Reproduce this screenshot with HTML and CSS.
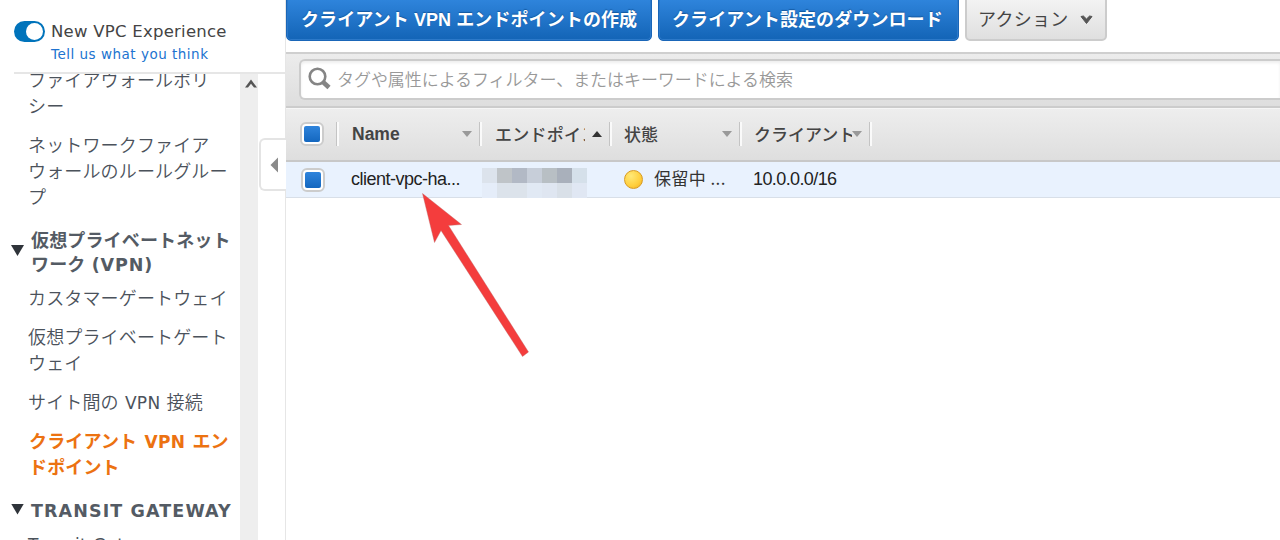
FILE: index.html
```html
<!DOCTYPE html>
<html lang="ja">
<head>
<meta charset="utf-8">
<title>クライアント VPN エンドポイント</title>
<link rel="stylesheet" href="styles.css">
</head>
<body>
<div class="app">
  <aside class="sidebar">
    <div class="experience">
      <span class="toggle"><span class="knob"></span></span>
      <div>
        <div class="exp-title">New VPC Experience</div>
        <a class="exp-link">Tell us what you think</a>
      </div>
    </div>
    <div class="nav-area">
      <nav class="nav">
        <a class="item">ファイアウォールポリ<br>シー</a>
        <a class="item">ネットワークファイア<br>ウォールのルールグルー<br>プ</a>
        <div class="group"><i class="tri"></i><span>仮想プライベートネット<br>ワーク <span class="paren">(VPN)</span></span></div>
        <a class="item">カスタマーゲートウェイ</a>
        <a class="item">仮想プライベートゲート<br>ウェイ</a>
        <a class="item">サイト間の <span class="abbr">VPN</span> 接続</a>
        <a class="item active">クライアント <span class="abbr">VPN</span> エン<br>ドポイント</a>
        <div class="group transit"><i class="tri"></i><span>TRANSIT GATEWAY</span></div>
        <a class="item next">Transit Gat</a>
      </nav>
      <div class="scrollbar"><svg width="12" height="10" viewBox="0 0 12 10"><path d="M0 8.5L6 0.5L12 8.5H9L6 4.7L3 8.5Z" fill="#555"/></svg></div>
    </div>
    <div class="collapse"><svg width="8" height="16" viewBox="0 0 8 16"><path d="M8 0.5V15.5L0.5 8Z" fill="#8a8a8a"/></svg></div>
  </aside>
  <main class="main">
    <div class="toolbar">
      <button class="btn primary create">クライアント <span class="vpn">VPN</span> エンドポイントの作成</button>
      <button class="btn primary download">クライアント設定のダウンロード</button>
      <button class="btn actions">アクション<svg width="13" height="10" viewBox="0 0 13 10"><path d="M1 1.5L6.5 8.5L12 1.5L9.6 1L6.5 4L3.4 1Z" fill="#555" stroke="#555" stroke-linejoin="round"/></svg></button>
    </div>
    <div class="filter">
      <div class="search">
        <svg width="23" height="23" viewBox="0 0 23 23" fill="none" stroke="#858585"><circle cx="9.5" cy="9.5" r="7.8" stroke-width="2.6"/><path d="M15 15L21 20.5" stroke-width="4.6"/></svg>
        <span>タグや属性によるフィルター、またはキーワードによる検索</span>
      </div>
    </div>
    <div class="row head">
      <div class="cell c-check"><i class="check"></i></div>
      <div class="cell c-name"><span class="label latin">Name</span><i class="down"></i></div>
      <div class="cell c-endpoint"><span class="label">エンドポイント</span><i class="up"></i></div>
      <div class="cell c-state"><span class="label">状態</span><i class="down"></i></div>
      <div class="cell c-client"><span class="label">クライアント</span><i class="down"></i></div>
    </div>
    <div class="row data">
      <div class="cell c-check"><i class="check"></i></div>
      <div class="cell c-name"><span class="client-name">client-vpc-ha...</span></div>
      <div class="cell c-endpoint">
        <div class="mosaic">
          <i class="m1"></i><i class="m2"></i><i class="m3"></i><i class="m4"></i><i class="m5"></i><i class="m6"></i><i class="m7"></i>
          <i class="n1"></i><i class="n2"></i><i class="n3"></i><i class="n4"></i><i class="n5"></i><i class="n6"></i><i class="n7"></i>
        </div>
      </div>
      <div class="cell c-state"><i class="dot"></i><span class="pending">保留中 ...</span></div>
      <div class="cell c-client"><span class="cidr">10.0.0.0/16</span></div>
    </div>
  </main>
  <svg class="arrow" width="110" height="170" viewBox="0 0 110 170"><path d="M2.5 3.5L41.5 34.5L28.5 35.5L108.5 162L102.5 166.5L21 40.5L14.5 52.5Z" fill="#f43d3d" stroke="#b66" stroke-width=".4"/></svg>
</div>
</body>
</html>
```
FILE: styles.css
```css
* { box-sizing: border-box; }
body { margin: 0; background: #fff; overflow: hidden; }
i { display: block; flex: none; }
svg { display: block; flex: none; }
.app { position: relative; display: flex; width: 1280px; height: 540px; overflow: hidden; }

.sidebar {
  position: relative; display: flex; flex-direction: column; flex: none;
  width: 286px; border-right: 1px solid #e6e6e6;
  font-family: "DejaVu Sans", "Noto Sans CJK JP", sans-serif; color: #545b64;
}
.experience {
  display: flex; gap: 6px; flex: none; height: 74px; margin-left: 14px; padding-top: 21px;
  border-bottom: 2px solid #e6e6e6;
}
.toggle { flex: none; width: 31px; height: 21px; border-radius: 11px; background: #0073bb; padding: 2px; display: flex; justify-content: flex-end; }
.knob { width: 17px; height: 17px; border-radius: 50%; background: #fff; }
.exp-title { font-size: 16.5px; line-height: 22px; letter-spacing: .25px; color: #444; white-space: nowrap; }
.exp-link { display: block; font-size: 13.5px; line-height: 22px; letter-spacing: .5px; color: #2073d0; white-space: nowrap; }
.nav-area { display: flex; flex: 1; min-height: 0; overflow: hidden; }
.nav { width: 240px; flex: none; padding-left: 28px; margin-top: -8px; }
.item {
  display: block; margin-bottom: 13px; font-size: 18px; line-height: 26px; letter-spacing: .15px; white-space: nowrap;
  font-family: "Noto Sans CJK JP", sans-serif; font-weight: 350; color: #4b525b;
}
.item.active { color: #ec7211; font-weight: 700; padding-left: 1px; }
.abbr { font-family: "DejaVu Sans", sans-serif; font-weight: 400; font-size: 17px; line-height: 20px; letter-spacing: .3px; margin: 0 2px; }
.active .abbr { font-weight: 700; margin: 0 3px; }
.group {
  display: flex; align-items: center; gap: 7px; margin: 18px 0 9px -17px;
  font-size: 18px; line-height: 24px; letter-spacing: .15px; font-weight: 700; white-space: nowrap;
  font-family: "Noto Sans CJK JP", sans-serif;
}
.paren { font-family: "DejaVu Sans", sans-serif; font-size: 17.5px; line-height: 20px; letter-spacing: .9px; margin-left: 2px; }
.transit { font-family: "DejaVu Sans", sans-serif; font-size: 17.5px; letter-spacing: 1.1px; margin-top: 20px; }
.item.next { font-family: "DejaVu Sans", sans-serif; font-weight: 400; font-size: 17px; letter-spacing: .4px; }
.tri { width: 13px; height: 11px; background: #2f343a; clip-path: polygon(0 0, 100% 0, 50% 100%); margin-top: -1px; }
.transit .tri { margin-top: -4px; }
.scrollbar { width: 18px; background: #eee; padding: 5px 0 0 5px; }
.collapse {
  position: absolute; left: 259px; top: 138px; width: 27px; height: 53px; background: #fff;
  border: 2px solid #e4e4e4; border-right: 0; border-radius: 6px 0 0 6px; padding: 17px 0 0 9px;
}

.main { flex: 1; min-width: 0; font-family: "Liberation Sans", "Noto Sans CJK JP", sans-serif; }
.toolbar { display: flex; gap: 6px; height: 52px; align-items: flex-start; }
.btn {
  display: flex; align-items: center; height: 46px; margin-top: -5px; padding: 3px 0 0 14px;
  border-radius: 5px; font: 700 18px/24px "Liberation Sans", "Noto Sans CJK JP", sans-serif; white-space: nowrap;
}
.primary { color: #fff; border: 1px solid #1a66b8; background: linear-gradient(#3187df, #1364b6); box-shadow: inset 0 0 0 1px #2c79c9; text-shadow: 0 -1px 1px #1459a0; letter-spacing: .1px; }
.create { width: 366px; }
.vpn { margin: 0 5px; }
.download { width: 301px; padding-left: 13px; }
.actions { width: 142px; font-weight: 400; color: #444; border: 2px solid #ccc; background: linear-gradient(#f4f4f4, #dfdfdf); padding-left: 11px; gap: 11px; letter-spacing: .3px; }
.filter { height: 54px; border-top: 2px solid #cfcfcf; background: linear-gradient(#ececec, #dedede); padding: 5px 0 0 13px; }
.search {
  display: flex; align-items: center; gap: 6px; height: 41px; padding: 0 0 2px 7px;
  border: 2px solid #ccc; border-right: 0; border-radius: 6px 0 0 6px; background: #fff; box-shadow: inset 0 2px 3px #eee;
  font: 350 17px/24px "Noto Sans CJK JP", sans-serif; letter-spacing: -.06px; color: #999; white-space: nowrap;
}
.row { display: flex; }
.head { height: 56px; border-top: 2px solid #ccc; border-bottom: 2px solid #c8c8c8; background: linear-gradient(#eee, #dedede); align-items: center; box-shadow: inset 0 1px #f6f6f6; }
.data { height: 36px; background: #e9f2fe; border-bottom: 1px solid #d8dfe8; align-items: center; }
.cell { display: flex; align-items: center; flex: none; overflow: hidden; white-space: nowrap; }
.head .cell { height: 24px; border-right: 2px solid #fafafa; box-shadow: inset -1px 0 #c4c4c4; padding-right: 8px; }
.c-check { width: 53px; padding-left: 14px; }
.c-name { width: 143px; padding-left: 13px; }
.c-endpoint { width: 130px; padding-left: 13px; }
.c-state { width: 130px; padding-left: 12px; }
.c-client { width: 130px; padding-left: 12px; }
.label { flex: 1; min-width: 0; overflow: hidden; font: 500 17px/24px "Noto Sans CJK JP", sans-serif; color: #444; }
.latin { font: 700 17.5px/24px "Liberation Sans", sans-serif; }
.down, .up { width: 10px; height: 6px; background: #999; clip-path: polygon(0 0, 100% 0, 50% 100%); }
.up { background: #333; clip-path: polygon(50% 0, 100% 100%, 0 100%); }
.head .c-endpoint .label { flex: none; width: 90px; margin-right: 7px; letter-spacing: .25px; }
.check { width: 24px; height: 24px; border: 2px solid #ccc; border-radius: 6px; background: linear-gradient(#2f84dc, #1467bf) content-box, #fff; padding: 2px; }
.data .c-check { padding-left: 15px; }
.data .c-name { padding-left: 12px; }
.data .c-endpoint { padding-left: 0; height: 36px; }
.client-name, .cidr { font-size: 18px; line-height: 24px; color: #222; margin-top: -1px; }
.client-name { letter-spacing: -.5px; }
.cidr { letter-spacing: -.6px; }
.data .c-client { padding-left: 11px; }
.dot { width: 19px; height: 19px; border-radius: 50%; margin-right: 11px; border: 1px solid #d99b20; background: radial-gradient(circle at 35% 30%, #ffe978, #ffcf3d 60%, #efac20); }
.data .c-state { padding-left: 12px; }
.pending { font: 400 17px/24px "Noto Sans CJK JP", sans-serif; letter-spacing: .4px; color: #333; margin-top: -3px; }
.mosaic { display: grid; grid-template: 15px 15px / repeat(7, 15px); margin-top: 7px; }
.m1 { background: #dce3ec; } .m2 { background: #bfc4c8; } .m3 { background: #b2b9c5; } .m4 { background: #c7ced9; }
.m5 { background: #b8bfc4; } .m6 { background: #a9b0bb; } .m7 { background: #d5e0ea; }
.n1 { background: #e5edf9; } .n2, .n3 { background: #dce3eb; } .n4 { background: #e1e9f4; }
.n5 { background: #dfe6f1; } .n6 { background: #d9e0e8; } .n7 { background: #e0e7f3; }
.arrow { position: absolute; left: 420px; top: 190px; }
```
